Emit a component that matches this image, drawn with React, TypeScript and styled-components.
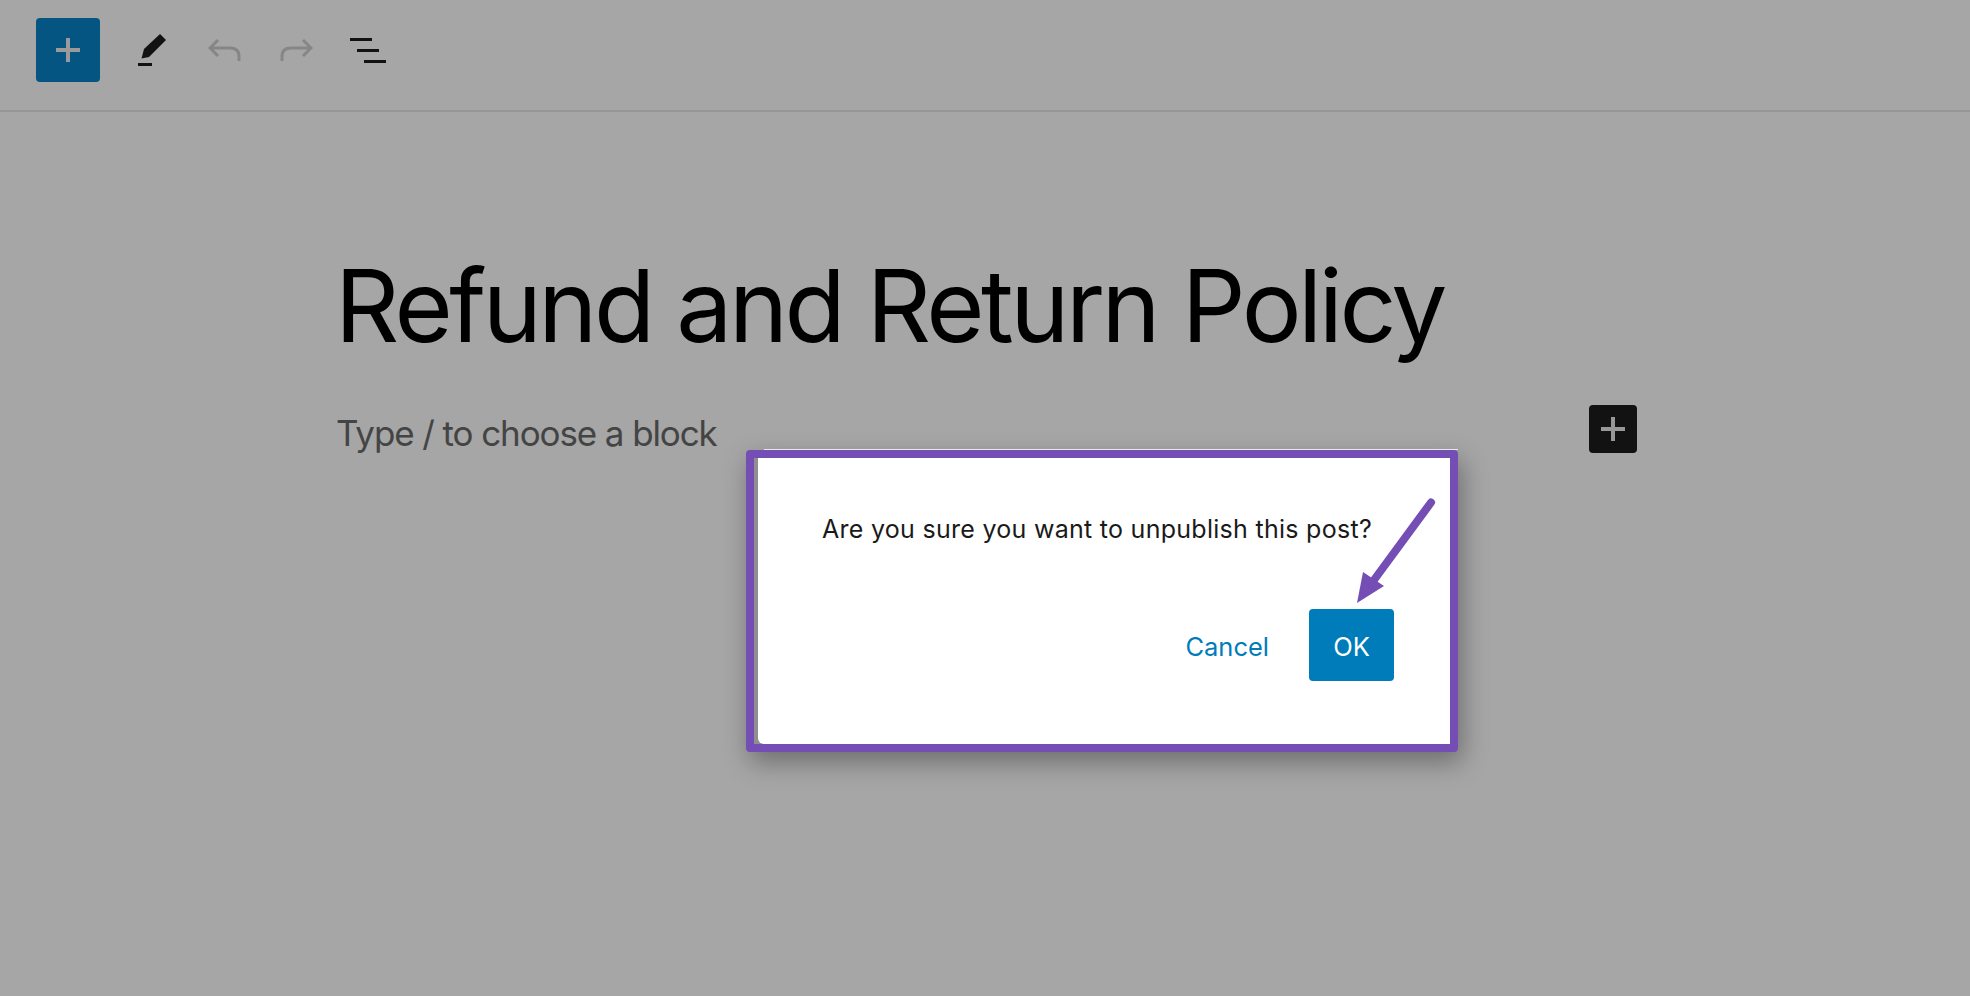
import React from 'react';
import styled, { createGlobalStyle } from 'styled-components';

const GlobalStyle = createGlobalStyle`
  html, body {
    margin: 0;
    padding: 0;
    background: #a6a6a6;
    font-family: Inter, "Liberation Sans", sans-serif;
  }
`;

const Page = styled.div`
  position: relative;
  width: 1970px;
  height: 996px;
  overflow: hidden;
  background: #a6a6a6;
`;

const Toolbar = styled.div`
  display: flex;
  align-items: center;
  height: 112px;
  padding: 0 0 0 36px;
  box-sizing: border-box;
  border-bottom: 2px solid #969696;
`;

const InserterButton = styled.div`
  width: 64px;
  height: 64px;
  margin-top: -10px;
  border-radius: 4px;
  background: #045581;
  display: flex;
  align-items: center;
  justify-content: center;
  margin-right: 38px;
`;

const ToolIcon = styled.svg<{ $gap?: number }>`
  display: block;
  margin-top: -10px;
  margin-right: ${(p) => p.$gap ?? 0}px;
`;

const Editor = styled.div`
  padding: 134px 0 0 336px;
`;

const Title = styled.h1`
  margin: 0 0 0 -1px;
  font-size: 100px;
  font-weight: 400;
  line-height: 120px;
  letter-spacing: -3.5px;
  color: #000;
`;

const PlaceholderRow = styled.div`
  display: flex;
  align-items: center;
  margin-top: 39px;
  height: 48px;
`;

const Placeholder = styled.div`
  width: 1253px;
  margin-top: 8px;
  font-size: 35px;
  letter-spacing: -1.1px;
  color: #444;
`;

const BlockAdd = styled.div`
  width: 48px;
  height: 48px;
  border-radius: 4px;
  background: #121212;
  display: flex;
  align-items: center;
  justify-content: center;
`;

const Highlight = styled.div`
  position: absolute;
  left: 746px;
  top: 450px;
  width: 712px;
  height: 302px;
  box-sizing: border-box;
  border: 8px solid #744eb4;
  border-radius: 4px;
  background: #8f8f8f;
  box-shadow: 4px 10px 26px rgba(0, 0, 0, 0.34);

  &::before {
    content: '';
    position: absolute;
    left: 10px;
    right: -8px;
    top: -9px;
    height: 1px;
    background: #e8e8e8;
  }
`;

const Dialog = styled.div`
  position: absolute;
  inset: 0 0 0 4px;
  border-radius: 0 0 0 6px;
  background: #fff;
  padding: 55px 56px 0 64px;
  box-sizing: border-box;
`;

const Message = styled.div`
  font-size: 25px;
  line-height: 32px;
  letter-spacing: 0.28px;
  color: #1a1a1a;
`;

const Actions = styled.div`
  display: flex;
  justify-content: flex-end;
  align-items: center;
  gap: 40px;
  margin-top: 64px;
`;

const CancelLink = styled.div`
  padding-top: 2px;
  font-size: 25.5px;
  color: #007cba;
`;

const OkButton = styled.div`
  width: 85px;
  height: 72px;
  padding-top: 2px;
  box-sizing: border-box;
  border-radius: 4px;
  background: #007cba;
  color: #fff;
  font-size: 25.5px;
  display: flex;
  align-items: center;
  justify-content: center;
`;

const Arrow = styled.svg`
  position: absolute;
  left: 1340px;
  top: 490px;
`;

const Plus = ({ size, weight, color }: { size: number; weight: number; color: string }) => (
  <svg width={size} height={size} viewBox={`0 0 ${size} ${size}`}>
    <rect x={0} y={(size - weight) / 2} width={size} height={weight} fill={color} />
    <rect x={(size - weight) / 2} y={0} width={weight} height={size} fill={color} />
  </svg>
);

const App: React.FC = () => {
  return (
    <Page>
      <GlobalStyle />
      <Toolbar>
        <InserterButton>
          <Plus size={24} weight={4} color="#9a9a9a" />
        </InserterButton>
        <ToolIcon width="30" height="34" viewBox="0 0 30 34" $gap={40}>
          <path d="M6 16 L22 1 L28 7 L11 24 L3.5 25.5 Z" fill="#121212" />
          <rect x="0" y="30" width="14" height="3" fill="#121212" />
        </ToolIcon>
        <ToolIcon width="34" height="24" viewBox="0 0 34 24" $gap={37}>
          <path
            d="M10 2 L2 10 L10 18 M2 10 L22 10 Q31 10 31 18 L31 23"
            fill="none"
            stroke="#868686"
            strokeWidth="3"
          />
        </ToolIcon>
        <ToolIcon width="34" height="24" viewBox="0 0 34 24" $gap={37}>
          <path
            d="M24 2 L32 10 L24 18 M32 10 L12 10 Q3 10 3 18 L3 23"
            fill="none"
            stroke="#868686"
            strokeWidth="3"
          />
        </ToolIcon>
        <ToolIcon width="38" height="28" viewBox="0 0 38 28">
          <rect x="0" y="2" width="22" height="3" fill="#121212" />
          <rect x="7" y="13" width="22" height="3" fill="#121212" />
          <rect x="14" y="24" width="22" height="3" fill="#121212" />
        </ToolIcon>
      </Toolbar>
      <Editor>
        <Title>Refund and Return Policy</Title>
        <PlaceholderRow>
          <Placeholder>Type / to choose a block</Placeholder>
          <BlockAdd>
            <Plus size={24} weight={4} color="#989898" />
          </BlockAdd>
        </PlaceholderRow>
      </Editor>
      <Highlight>
        <Dialog>
          <Message>Are you sure you want to unpublish this post?</Message>
          <Actions>
            <CancelLink>Cancel</CancelLink>
            <OkButton>OK</OkButton>
          </Actions>
        </Dialog>
      </Highlight>
      <Arrow width="100" height="120" viewBox="0 0 100 120">
        <path d="M91 12.5 L34 90" stroke="#744eb4" strokeWidth="8" strokeLinecap="round" fill="none" />
        <path d="M17 113 L23 82 L44 96 Z" fill="#744eb4" />
      </Arrow>
    </Page>
  );
};

export default App;
